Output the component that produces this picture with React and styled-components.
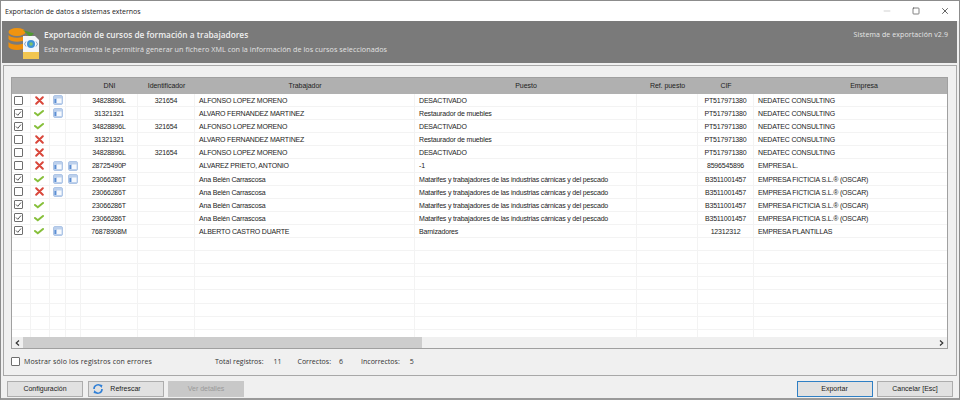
import React from "react";
import styled, { createGlobalStyle } from "styled-components";
import { Minus, Square, X } from "lucide-react";

const GlobalStyle = createGlobalStyle`
  html, body { margin: 0; padding: 0; background: #f0f0f0; }
  body { font-family: "Open Sans", "Liberation Sans", sans-serif; }
`;

const COLUMNS = "19px 19px 16px 15px 57px 57px 220px 222px 61px 56px 220px";

const Window = styled.div`
  width: 960px;
  height: 400px;
  box-sizing: border-box;
  border: 1px solid #8c8c8c;
  border-bottom: 2px solid #9a9a9a;
  background: #f0f0f0;
  display: flex;
  flex-direction: column;
  overflow: hidden;
`;

const TitleBar = styled.div`
  height: 20px;
  background: #fff;
  display: flex;
  align-items: center;
  justify-content: space-between;
  padding: 0 9px 0 4px;
  font-size: 7px;
  color: #222;
  flex: none;
`;

const WindowButtons = styled.div`
  display: flex;
  align-items: center;
  gap: 20px;
  color: #444;
  svg { display: block; }
`;

const Banner = styled.div`
  height: 42px;
  margin: 0 2px 0 1px;
  background: #7a7a7a;
  color: #f0f0f0;
  display: flex;
  align-items: flex-start;
  padding: 6px 6px 0 6px;
  box-sizing: border-box;
  flex: none;
`;

const BannerText = styled.div`
  margin-left: 5px;
  padding-top: 2px;
  flex: 1;
`;

const BannerTitle = styled.div`
  font-size: 8.3px;
  font-weight: 600;
  line-height: 12px;
`;

const BannerSub = styled.div`
  font-size: 7.2px;
  line-height: 12px;
  margin-top: 2px;
  letter-spacing: 0.06px;
  color: #e2e2e2;
`;

const Version = styled.div`
  font-size: 7px;
  letter-spacing: 0.1px;
  line-height: 12px;
  color: #e6e6e6;
  margin: 2px 3px 0 0;
`;

const Panel = styled.div`
  height: 311px;
  margin: 2px 2px 0 2px;
  border: 1px solid #a8a8a8;
  box-sizing: border-box;
  padding: 11px 8px 0 7px;
  display: flex;
  flex-direction: column;
  flex: none;
`;

const GridBox = styled.div`
  height: 272px;
  box-sizing: border-box;
  border: 1px solid #a0a0a0;
  background: #fff;
  display: flex;
  flex-direction: column;
  flex: none;
  overflow: hidden;
`;

const HeaderRow = styled.div`
  display: grid;
  grid-template-columns: ${COLUMNS};
  height: 16px;
  background: #b0b0b0;
  flex: none;
`;

const HeaderCell = styled.div`
  font-family: "Liberation Sans", sans-serif;
  font-size: 7px;
  letter-spacing: -0.05px;
  line-height: 16px;
  text-align: center;
  color: #222;
  white-space: nowrap;
`;

const Body = styled.div`
  flex: 1;
  min-height: 0;
  overflow: hidden;
`;

const Row = styled.div`
  display: grid;
  grid-template-columns: ${COLUMNS};
  height: 13.1px;
  border-bottom: 1px solid #f3f3f3;
  box-sizing: border-box;
`;

const Cell = styled.div`
  font-family: "Liberation Sans", sans-serif;
  font-size: 7px;
  letter-spacing: -0.18px;
  line-height: 13px;
  color: #1c1c1c;
  white-space: nowrap;
  overflow: hidden;
  border-right: 1px solid #f3f3f3;
  text-align: ${(p) => (p.$center ? "center" : "left")};
  padding-left: ${(p) => (p.$center || p.$icon ? "0" : "4px")};
  display: ${(p) => (p.$icon ? "flex" : "block")};
  align-items: center;
  justify-content: center;
  &:last-child { border-right: none; }
`;

const Box = styled.span`
  width: 9px;
  height: 9px;
  box-sizing: border-box;
  border: 1px solid #6e6e6e;
  border-radius: 1px;
  background: #fff;
  display: flex;
  align-items: center;
  justify-content: center;
  flex: none;
  margin-right: ${(p) => (p.$grid ? "5px" : "4px")};
  svg { display: block; }
`;

const Status = styled.span`
  display: flex;
  margin-right: 2px;
  svg { display: block; }
`;

const ScrollBar = styled.div`
  height: 11px;
  background: #f0f0f0;
  display: flex;
  align-items: center;
  flex: none;
`;

const ScrollArrow = styled.span`
  width: 11px;
  flex: none;
  display: flex;
  justify-content: center;
  color: #333;
  svg { display: block; }
`;

const ScrollThumb = styled.div`
  flex: none;
  width: 399px;
  height: 100%;
  background: #cdcdcd;
`;

const ScrollTrack = styled.div`
  flex: 1;
`;

const Footer = styled.div`
  display: flex;
  align-items: center;
  height: 22px;
  margin-top: 1px;
  font-family: "Open Sans", sans-serif;
  font-size: 7px;
  color: #333;
`;

const ErrorsToggle = styled.label`
  display: flex;
  align-items: center;
  width: 204px;
  letter-spacing: 0.15px;
  white-space: nowrap;
`;

const Stat = styled.span`
  display: inline-flex;
  gap: ${(p) => p.$gap}px;
  margin-right: ${(p) => p.$after}px;
  white-space: nowrap;
`;

const Buttons = styled.div`
  display: flex;
  align-items: center;
  padding: 5px 6px 0 6px;
  gap: 4.5px;
`;

const Button = styled.div`
  width: 76px;
  height: 16px;
  box-sizing: border-box;
  border: 1px solid ${(p) => (p.$primary ? "#2f7fc4" : p.$disabled ? "#c8c8c8" : "#adadad")};
  background: ${(p) => (p.$disabled ? "#c8c8c8" : "#e1e1e1")};
  color: ${(p) => (p.$disabled ? "#9a9a9a" : "#222")};
  font-family: "Liberation Sans", sans-serif;
  font-size: 7px;
  line-height: 14px;
  text-align: center;
  position: relative;
  svg { position: absolute; left: 3px; top: 1px; }
`;

const Spacer = styled.div`
  flex: 1;
`;

const Ok = () => (
  <svg width="10" height="8" viewBox="0 0 10 8">
    <path d="M1 4 L3.8 6.3 L9 2" fill="none" stroke="#86bf3a" strokeWidth="2" strokeLinecap="round" />
  </svg>
);

const Bad = () => (
  <svg width="9" height="9" viewBox="0 0 9 9">
    <path d="M1.2 1.2 L7.8 7.8 M7.8 1.2 L1.2 7.8" stroke="#d9473b" strokeWidth="2" strokeLinecap="round" />
  </svg>
);

const Info = () => (
  <svg width="10" height="10" viewBox="0 0 10 10">
    <rect x="0.5" y="0.5" width="9" height="9" rx="1.5" fill="#bcd0ec" stroke="#aec5e6" />
    <rect x="4" y="3.5" width="4.5" height="4.5" fill="#f6f9fd" />
    <rect x="1.5" y="4" width="1.6" height="4" fill="#5a8ed4" />
  </svg>
);

const Tick = () => (
  <svg width="7" height="7" viewBox="0 0 7 7">
    <path d="M1 3.5 L2.8 5.3 L6 1.5" fill="none" stroke="#555" strokeWidth="1" />
  </svg>
);

const Logo = () => (
  <svg width="31" height="32" viewBox="0 0 31 32" style={{ flex: "none" }}>
    <ellipse cx="9" cy="5" rx="8.5" ry="4" fill="#f0940f" />
    <path d="M0.5 8 C3 11.5 15 11.5 17.5 8 V12 C15 15.5 3 15.5 0.5 12 Z" fill="#ee8f0c" />
    <path d="M0.5 15 C3 18.5 15 18.5 17.5 15 V20 C15 24 3 24 0.5 20 Z" fill="#ee8f0c" />
    <path d="M15 3 L26 6.5 L22 10 Z" fill="#4f9a34" />
    <path d="M15 9 H27 L31 13 V32 H15 Z" fill="#f4f6fa" />
    <rect x="15" y="25" width="16" height="7" fill="#f2c650" />
    <circle cx="23" cy="17" r="4" fill="#3f93d6" />
    <circle cx="23" cy="17" r="1.8" fill="#7ec26a" />
    <path d="M18 14.5 L16.5 17 L18 19.5 M28 14.5 L29.5 17 L28 19.5" fill="none" stroke="#6d8fb8" strokeWidth="0.8" />
  </svg>
);

const Refresh = () => (
  <svg width="12" height="12" viewBox="0 0 12 12">
    <path d="M2 6 A4 4 0 0 1 9 3.2" fill="none" stroke="#2f7fd6" strokeWidth="1.6" />
    <path d="M10 6 A4 4 0 0 1 3 8.8" fill="none" stroke="#2f7fd6" strokeWidth="1.6" />
    <path d="M7.5 1.5 L10.5 2 L9.5 5 Z M4.5 10.5 L1.5 10 L2.5 7 Z" fill="#2f7fd6" />
  </svg>
);

const headers = ["", "", "", "", "DNI", "Identificador", "Trabajador", "Puesto", "Ref. puesto", "CIF", "Empresa"];

const NEDATEC = { cif: "PT517971380", empresa: "NEDATEC CONSULTING" };
const FICTICIA = {
  dni: "23066286T",
  nombre: "Ana Belén Carrascosa",
  puesto: "Matarifes y trabajadores de las industrias cárnicas y del pescado",
  cif: "B3511001457",
  empresa: "EMPRESA FICTICIA S.L.® (OSCAR)",
};
const ALFONSO = { dni: "34828896L", id: "321654", nombre: "ALFONSO LOPEZ MORENO", puesto: "DESACTIVADO", ...NEDATEC };
const ALVARO = { dni: "31321321", nombre: "ALVARO FERNANDEZ MARTINEZ", puesto: "Restaurador de muebles", ...NEDATEC };

const rows = [
  { ...ALFONSO, ok: false, info: 1 },
  { ...ALVARO, ok: true, info: 1 },
  { ...ALFONSO, ok: true, info: 0 },
  { ...ALVARO, ok: false, info: 0 },
  { ...ALFONSO, ok: false, info: 0 },
  { dni: "28725490P", nombre: "ALVAREZ PRIETO, ANTONIO", puesto: "-1", cif: "8596545896", empresa: "EMPRESA L.", ok: false, info: 2 },
  { ...FICTICIA, ok: true, info: 2 },
  { ...FICTICIA, ok: false, info: 1 },
  { ...FICTICIA, ok: true, info: 0 },
  { ...FICTICIA, ok: true, info: 0 },
  { dni: "76878908M", nombre: "ALBERTO CASTRO DUARTE", puesto: "Barnizadores", cif: "12312312", empresa: "EMPRESA PLANTILLAS", ok: true, info: 1 },
];

// empty grid rows keep the lines going down to the scrollbar
const emptyRows = Array.from({ length: 8 }, (_, i) => i);

export default function App() {
  return (
    <>
      <GlobalStyle />
      <Window>
        <TitleBar>
          <span>Exportación de datos a sistemas externos</span>
          <WindowButtons>
            <Minus size={10} color="#c8c8c8" />
            <Square size={8} />
            <X size={10} />
          </WindowButtons>
        </TitleBar>
        <Banner>
          <Logo />
          <BannerText>
            <BannerTitle>Exportación de cursos de formación a trabajadores</BannerTitle>
            <BannerSub>Esta herramienta le permitirá generar un fichero XML con la información de los cursos seleccionados</BannerSub>
          </BannerText>
          <Version>Sistema de exportación v2.9</Version>
        </Banner>
        <Panel>
          <GridBox>
            <HeaderRow>
              {headers.map((h, i) => (
                <HeaderCell key={i}>{h}</HeaderCell>
              ))}
            </HeaderRow>
            <Body>
              {rows.map((r, i) => (
                <Row key={i}>
                  <Cell $icon>
                    <Box $grid>{r.ok && <Tick />}</Box>
                  </Cell>
                  <Cell $icon>
                    <Status>{r.ok ? <Ok /> : <Bad />}</Status>
                  </Cell>
                  <Cell $icon>{r.info > 0 && <Info />}</Cell>
                  <Cell $icon>{r.info > 1 && <Info />}</Cell>
                  <Cell $center>{r.dni}</Cell>
                  <Cell $center>{r.id}</Cell>
                  <Cell>{r.nombre}</Cell>
                  <Cell>{r.puesto}</Cell>
                  <Cell />
                  <Cell $center>{r.cif}</Cell>
                  <Cell>{r.empresa}</Cell>
                </Row>
              ))}
              {emptyRows.map((n) => (
                <Row key={n}>
                  {headers.map((h, i) => (
                    <Cell key={i} />
                  ))}
                </Row>
              ))}
            </Body>
            <ScrollBar>
              <ScrollArrow>
                <svg width="5" height="6" viewBox="0 0 5 6"><path d="M4 0.5 L1.2 3 L4 5.5" fill="none" stroke="#333" strokeWidth="1.2" /></svg>
              </ScrollArrow>
              <ScrollThumb />
              <ScrollTrack />
              <ScrollArrow>
                <svg width="5" height="6" viewBox="0 0 5 6"><path d="M1 0.5 L3.8 3 L1 5.5" fill="none" stroke="#333" strokeWidth="1.2" /></svg>
              </ScrollArrow>
            </ScrollBar>
          </GridBox>
          <Footer>
            <ErrorsToggle>
              <Box />
              Mostrar sólo los registros con errores
            </ErrorsToggle>
            <Stat $gap={10} $after={16}>Total registros: <span>11</span></Stat>
            <Stat $gap={8} $after={18}>Correctos: <span>6</span></Stat>
            <Stat $gap={10} $after={0}>Incorrectos: <span>5</span></Stat>
          </Footer>
        </Panel>
        <Buttons>
          <Button>Configuración</Button>
          <Button>
            <Refresh />
            Refrescar
          </Button>
          <Button $disabled>Ver detalles</Button>
          <Spacer />
          <Button $primary>Exportar</Button>
          <Button>Cancelar [Esc]</Button>
        </Buttons>
      </Window>
    </>
  );
}
